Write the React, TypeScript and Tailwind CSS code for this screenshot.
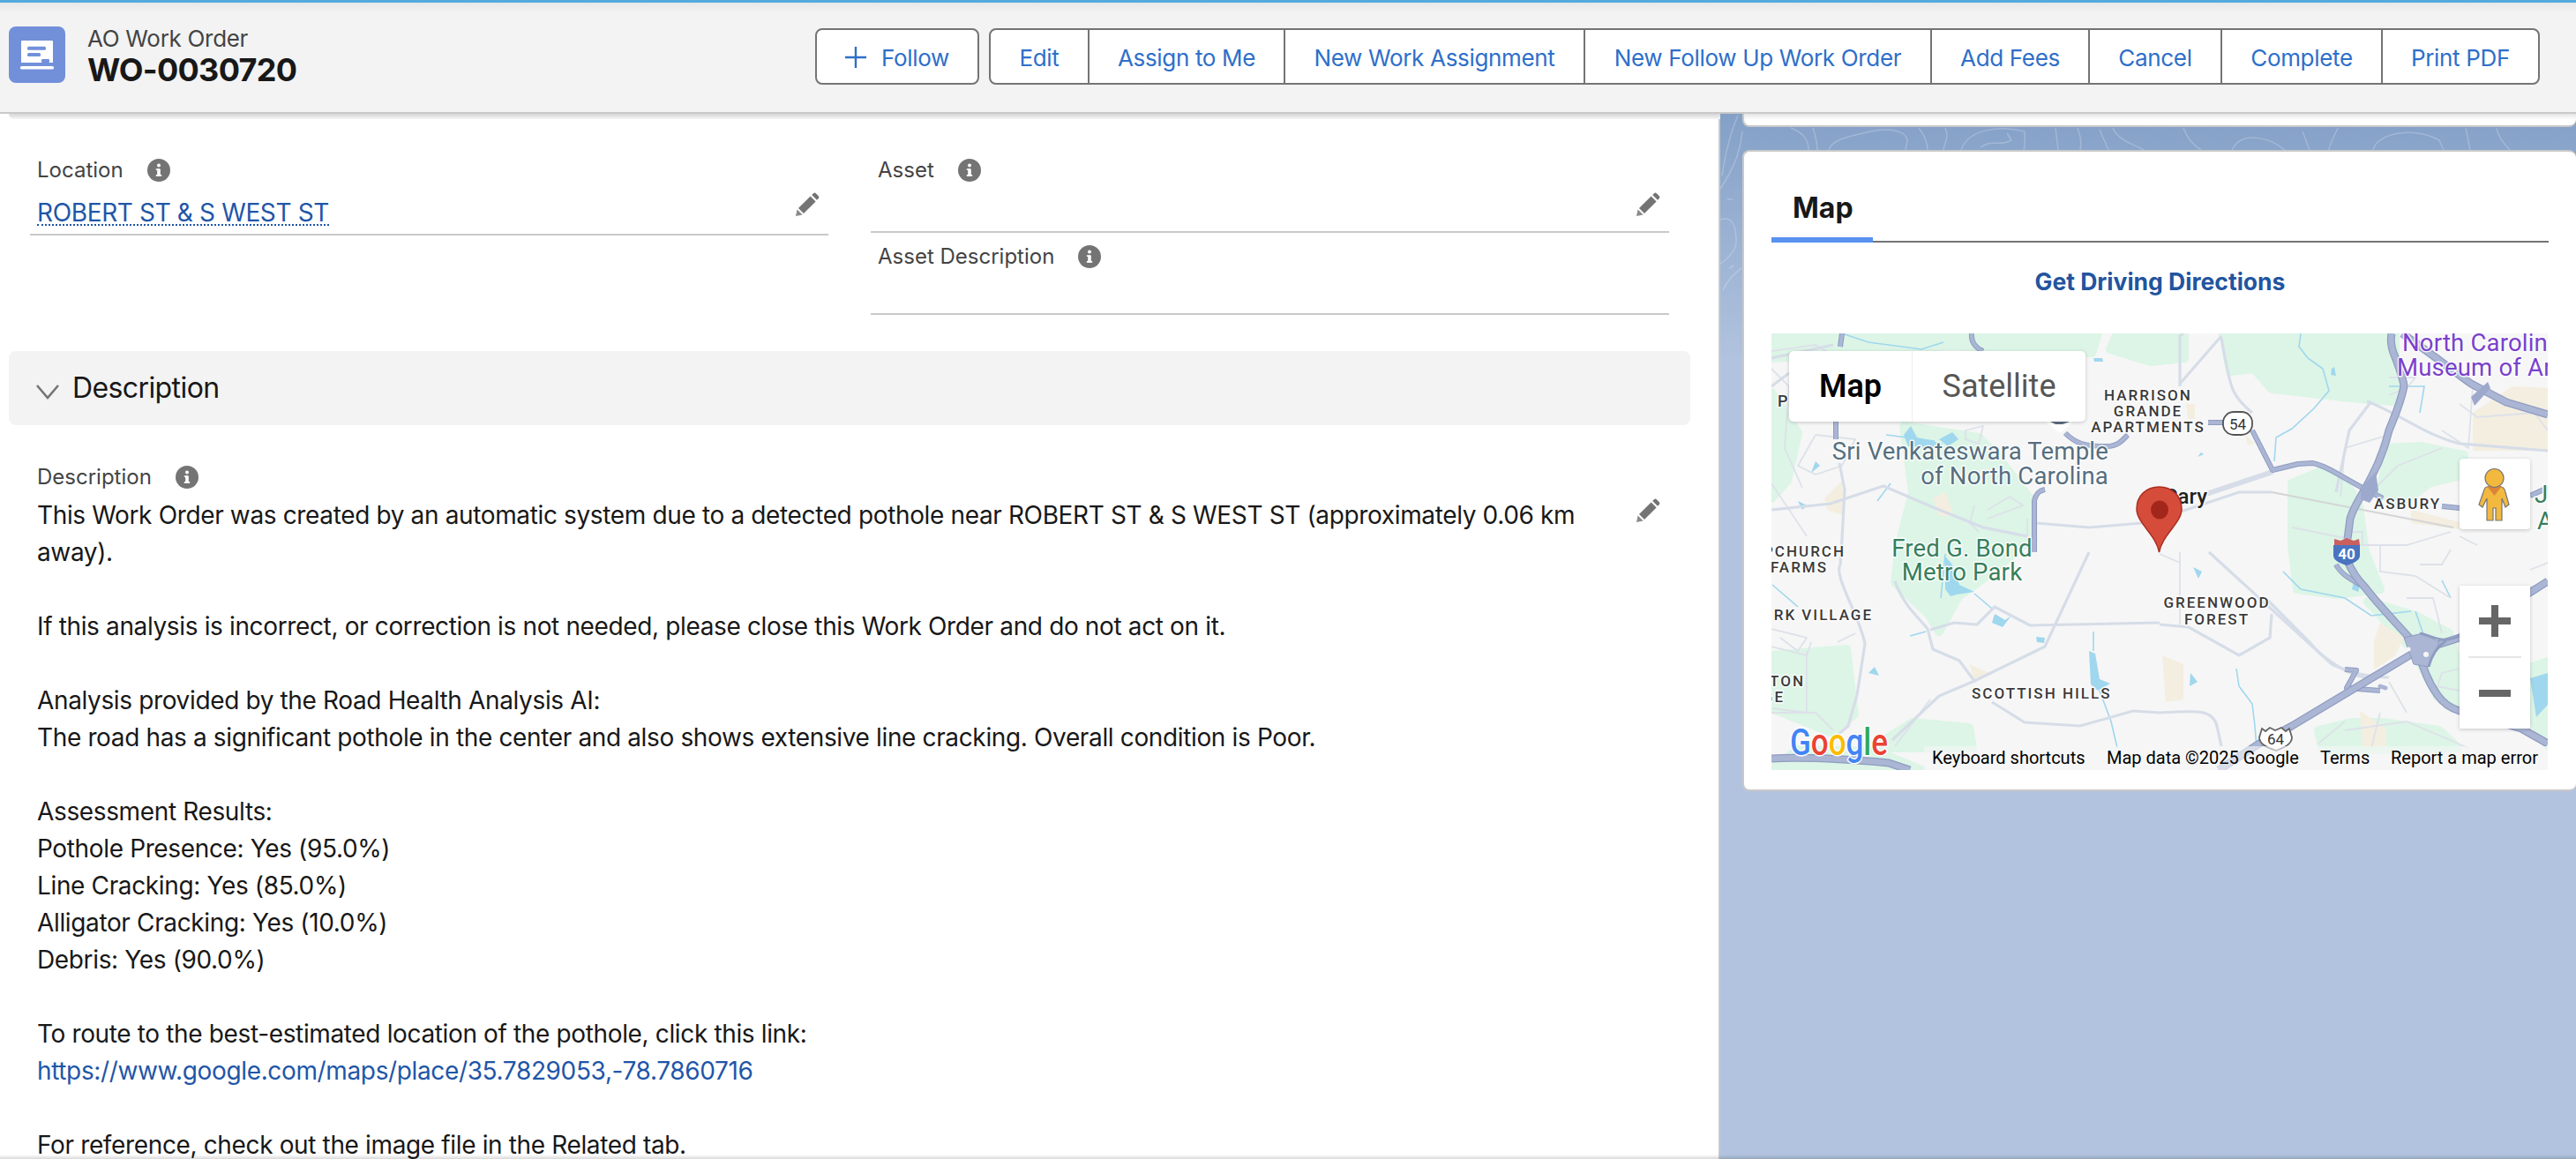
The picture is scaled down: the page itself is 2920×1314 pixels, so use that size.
import React from "react";

const Info = ({ className = "" }: { className?: string }) => (
  <svg viewBox="0 0 26 26" className={`w-[26px] h-[26px] shrink-0 ${className}`}>
    <circle cx="13" cy="13" r="13" fill="#747474" />
    <rect x="11.2" y="11.5" width="3.6" height="8" fill="#fff" />
    <rect x="9.8" y="18" width="6.4" height="1.8" fill="#fff" />
    <rect x="9.8" y="11.3" width="4" height="1.6" fill="#fff" />
    <circle cx="13" cy="7.6" r="2" fill="#fff" />
  </svg>
);

const Pencil = () => (
  <svg viewBox="0 0 28 28" className="w-[28px] h-[28px]">
    <path d="M1 27 L2.6 19.6 L8.6 25.4 Z" fill="#8a8a8a" />
    <path d="M4 18 L17.6 4.6 L23.6 10.4 L10 24 Z" fill="#747474" />
    <path d="M19.2 3 L21 1.2 C22 .4 23 .4 23.8 1.2 L26.8 4.2 C27.6 5 27.6 6 26.8 7 L25 8.8 Z" fill="#747474" />
  </svg>
);

const RecordIcon = () => (
  <div className="w-[64px] h-[64px] rounded-[8px] bg-[#7290da] shrink-0">
    <svg viewBox="0 0 64 64" className="w-[64px] h-[64px]">
      <path d="M15 16 H49 Q50 16 50 17 V41 H14 V17 Q14 16 15 16 Z" fill="#fff" />
      <rect x="37" y="37" width="9" height="4" rx="1" fill="#7290da" />
      <rect x="21" y="22.7" width="21" height="4" rx="1.5" fill="#7290da" />
      <rect x="21" y="30" width="15" height="4" rx="1.5" fill="#7290da" />
      <rect x="13" y="45" width="38" height="3.6" rx="1.5" fill="#fff" />
    </svg>
  </div>
);

const actions: { label: string; cls: string }[] = [
  { label: "Edit", cls: "w-[110px] rounded-l-[8px]" },
  { label: "Assign to Me", cls: "w-[222px] border-l-2 border-[#747474]" },
  { label: "New Work Assignment", cls: "w-[340px] border-l-2 border-[#747474]" },
  { label: "New Follow Up Work Order", cls: "w-[393px] border-l-2 border-[#747474]" },
  { label: "Add Fees", cls: "w-[179px] border-l-2 border-[#747474]" },
  { label: "Cancel", cls: "w-[150px] border-l-2 border-[#747474]" },
  { label: "Complete", cls: "w-[182px] border-l-2 border-[#747474]" },
  { label: "Print PDF", cls: "w-[178px] border-l-2 border-[#747474] rounded-r-[8px]" },
];

const Header = () => (
  <header className="relative z-20 h-[126px] shrink-0 flex items-center justify-between pl-[10px] pr-[41px] bg-gradient-to-b from-[#e8e8e8] via-[#f3f3f3] via-[10%] to-[#f3f3f3] border-b-2 border-[#c9c9c9]">
    <div className="flex items-center gap-[25px] -mt-[7px]">
      <RecordIcon />
      <div className="flex flex-col mt-[5px]">
        <span className="text-[26px] tracking-[-0.3px] leading-[30px] text-[#444444]">AO Work Order</span>
        <span className="text-[36px] tracking-[-0.7px] leading-[40px] font-bold text-[#181818]">WO-0030720</span>
      </div>
    </div>
    <div className="flex items-center gap-[11px] text-[26px] tracking-[-0.33px] text-[#2e6fc9] -mt-[2px]">
      <button className="w-[186px] h-[64px] flex items-center justify-center gap-[17px] pt-[2px] bg-white border-2 border-[#747474] rounded-[8px]">
        <svg viewBox="0 0 24 24" className="w-[24px] h-[24px]">
          <path d="M12 0 V24 M0 12 H24" stroke="#2e6fc9" strokeWidth="2.4" fill="none" />
        </svg>
        Follow
      </button>
      <div className="flex h-[64px] bg-white border-2 border-[#747474] rounded-[8px]">
        {actions.map((a) => (
          <button key={a.label} className={`h-full flex items-center justify-center pt-[2px] ${a.cls}`}>
            {a.label}
          </button>
        ))}
      </div>
    </div>
  </header>
);

const LabelRow = ({ text }: { text: string }) => (
  <div className="h-[28px] flex items-center gap-[27px] pl-[8px] text-[24px] text-[#444444]">
    <span>{text}</span>
    <Info />
  </div>
);

const body = `This Work Order was created by an automatic system due to a detected pothole near ROBERT ST & S WEST ST (approximately 0.06 km
away).

If this analysis is incorrect, or correction is not needed, please close this Work Order and do not act on it.

Analysis provided by the Road Health Analysis AI:
The road has a significant pothole in the center and also shows extensive line cracking. Overall condition is Poor.

Assessment Results:
Pothole Presence: Yes (95.0%)
Line Cracking: Yes (85.0%)
Alligator Cracking: Yes (10.0%)
Debris: Yes (90.0%)

To route to the best-estimated location of the pothole, click this link:
`;

const LeftColumn = () => (
  <main className="w-[1950px] shrink-0 bg-white border-r-2 border-[#c9c9c9] overflow-hidden">
    <div className="flex gap-[48px] pl-[34px] pt-[50px] w-[1892px] box-content">
      <div className="w-[905px]">
        <LabelRow text="Location" />
        <div className="h-[60px] border-b-2 border-[#c9c9c9] pl-[8px] pr-[10px] pt-[12px] flex justify-between">
          <a className="h-[36px] leading-[42px] text-[28px] tracking-[-0.36px] text-[#1f56a8] border-b-2 border-dotted border-[#1f56a8] mt-[1px]">ROBERT ST &amp; S WEST ST</a>
          <span className="-mt-[1px]"><Pencil /></span>
        </div>
      </div>
      <div className="w-[905px]">
        <LabelRow text="Asset" />
        <div className="h-[57px] border-b-2 border-[#c9c9c9] pr-[10px] pt-[11px] flex justify-end">
          <Pencil />
        </div>
        <div className="mt-[13px]">
          <LabelRow text="Asset Description" />
        </div>
        <div className="h-[52px] border-b-2 border-[#c9c9c9]" />
      </div>
    </div>
    <section className="ml-[10px] mt-[41px] w-[1906px] h-[84px] rounded-[8px] bg-[#f3f3f3] flex items-center gap-[14px] pl-[30px]">
      <svg viewBox="0 0 28 20" className="w-[28px] h-[20px] mt-[7px]">
        <path d="M2 3 L14 17 L26 3" stroke="#747474" strokeWidth="2.6" fill="none" />
      </svg>
      <h2 className="text-[32px] tracking-[-0.6px] text-[#181818]">Description</h2>
    </section>
    <div className="relative pl-[34px] mt-[45px]">
      <LabelRow text="Description" />
      <div className="absolute left-[1854px] top-[38px]"><Pencil /></div>
      <div className="pl-[8px] mt-[8px] text-[28px] tracking-[-0.36px] leading-[42px] text-[#181818] whitespace-pre-line">
        {body}
        <a className="text-[#1f56a8]">https://www.google.com/maps/place/35.7829053,-78.7860716</a>
        {"\n\nFor reference, check out the image file in the Related tab."}
      </div>
    </div>
  </main>
);

const wideHighways = [
  "M703 0 C701 10 703 18 707 27 C712 40 716 50 717 60 C713 80 706 95 700 110 C695 130 688 148 680 163 C672 180 660 195 656 210 L653 233",
  "M653 258 C658 270 665 280 673 288 C690 310 708 328 723 345 C730 358 736 370 740 381 C744 393 748 400 755 410 C762 420 770 425 780 428 L850 448 L880 465",
  "M880 281 L780 345 L730 361 L590 445 L553 465 L507 495",
  "M715 0 L747 23 L793 57 L833 78 L880 92",
  "M0 482 C40 480 90 483 133 487 L157 495",
];

const thinHighways = [
  "M545 110 L568 155 L597 148 L613 147 C630 150 650 165 670 175 L693 187",
  "M760 196 L780 198",
  "M860 184 L880 175",
  "M495 101 L512 101",
  "M227 0 C226 10 232 17 240 20",
  "M333 113 C345 125 355 128 380 128 C395 128 400 118 404 115",
  "M298 248 L298 190 C300 180 305 178 310 177",
  "M80 0 L78 15",
  "M73 100 L73 120",
  "M650 381 L663 382 L652 402 L690 405",
  "M640 262 C645 272 655 278 668 285",
];

const majorRoads = [
  "M0 200 L67 193 L127 173 L183 197 L240 220 L290 230",
  "M77 147 L83 177 L80 233 L78 262 C70 275 100 320 106 352 L97 410 L87 445 L67 462",
  "M140 281 C150 310 170 325 177 335 L183 358 L213 371 L230 394 L190 411 L137 461",
  "M180 336 L207 328 L233 330 L253 310 L293 331 L440 328",
  "M230 394 L310 355 L360 248",
  "M250 418 L287 441 L350 445 L410 428 L440 430 C480 428 500 425 505 445 L510 468",
  "M467 0 L463 3 L463 60",
  "M510 3 L463 57",
  "M510 5 C520 60 520 70 545 90",
  "M675 77 C710 90 740 115 780 125 L880 133",
  "M680 77 L655 110 L640 180",
  "M440 210 L530 180 L567 180",
  "M560 300 L610 350 C625 370 660 390 675 390",
  "M440 330 L473 333 L530 365 L565 345 L567 318",
  "M496 248 L635 375 C655 385 680 390 700 390",
  "M0 60 L20 45 M0 28 L70 13",
  "M300 215 L360 220 L420 215",
];

const minorRoads = [
  "M0 20 L50 13 L70 25", "M0 40 L20 60 L15 130 L35 175", "M0 170 L40 230", "M50 115 L95 120 L80 150 L50 160 L30 150 L50 115",
  "M220 110 L240 105 L235 125 L220 120 Z", "M245 200 L270 185 L285 195 L245 210", "M230 195 L225 215 L235 225",
  "M290 210 L290 235", "M440 250 L463 260 L463 330", "M463 260 L463 248", "M660 240 L720 240 L770 225",
  "M690 240 L690 270 L730 275", "M730 275 L770 300", "M735 262 L760 262 L770 245", "M720 300 L750 300 L760 340", "M780 380 L760 385 L755 400 L780 405",
  "M700 70 L720 62 L730 50 L700 50", "M680 180 L710 150 L760 130", "M645 185 L650 130 L700 115", "M780 80 L800 95 L865 90 L880 110", "M760 110 L790 130 L795 60",
  "M0 335 L40 345 L30 360 L10 345", "M0 355 L40 365 L45 350", "M0 425 L40 430 L40 360", "M0 430 L50 430 L70 450", "M75 350 L95 340",
  "M830 300 L880 280", "M860 268 L880 260", "M650 450 L720 440 L790 470", "M700 395 L720 430", "M690 430 L680 470", "M620 465 L650 440",
  "M140 468 L180 415", "M590 220 L650 232", "M670 240 L670 225 L655 225 L655 240", "M800 240 L790 235 L780 230",
];

const parks = [
  "512,0 707,0 707,77 677,75 647,72 613,68 567,63 547,40 520,43",
  "590,170 625,155 650,170 665,190 673,248 690,290 640,296 596,290 590,240",
  "700,130 735,128 785,138 785,160 745,170 712,195 690,180",
  "0,67 30,113 18,167 0,187",
  "150,105 235,118 255,138 295,190 292,235 240,278 212,298 190,338 178,318 140,282 145,240 160,180",
  "0,0 370,0 363,22 200,14 100,22 0,28",
  "0,365 85,358 94,432 67,452 0,425",
  "125,463 160,441 224,447 228,470 125,470",
  "625,473 620,450 657,441 693,441 757,450 778,470",
  "676,304 730,320 768,340 778,375 778,425 755,412 728,360",
  "862,378 880,372 880,468 862,438",
  "392,0 468,0 468,28 430,32 384,18",
  "0,495 30,472 120,474 170,495",
];

const tans = [
  "60,187 80,167 83,207 63,200",
  "183,187 197,180 207,207 190,207",
  "725,200 780,214 780,222 725,215",
  "690,328 717,345 707,365 683,381 683,348",
  "443,365 467,375 467,415 447,418",
  "667,428 697,448 697,468 670,468",
  "225,375 247,385 236,392 228,392",
  "470,80 480,80 480,97 472,97",
  "537,115 548,125 540,127",
  "795,90 840,60 880,62 880,133 795,133",
];

const lakes = [
  "197,253 205,262 213,285 230,293 210,296 203,298 197,290",
  "360,360 367,363 372,392 384,397 370,405 362,398",
  "860,391 880,385 880,421 867,435",
  "150,115 158,105 165,118 195,125 180,130 155,128",
  "190,120 205,112 212,120 200,128",
  "55,150 45,158 50,145",
  "365,28 375,28 376,32 366,32",
  "660,282 668,283 665,293 658,290",
  "253,318 265,325 272,320 262,333 250,328",
  "117,378 122,388 110,385",
  "488,270 478,265 484,278",
  "300,344 310,345 309,351 301,350",
  "30,190 40,195 35,200",
  "475,385 483,395 474,400",
  "635,40 638,38 640,48 634,47",
  "487,135 490,137 483,140",
];

const streams = [
  "M600 0 L598 15 L608 28 L625 40 L632 65 L615 85 L590 108 L572 118 L570 145",
  "M80 0 L110 10 L170 18 L195 10",
  "M130 115 L185 122",
  "M197 250 L192 300",
  "M157 343 L175 338",
  "M230 295 L250 312",
  "M365 338 L365 360",
  "M372 405 L385 440 L392 470",
  "M527 380 L530 400 L545 420 L548 445 L550 470",
  "M700 60 L740 60 L735 90",
  "M580 270 L600 290 L650 300 L680 320 L725 315",
  "M730 315 L742 350",
  "M1 285 L30 310",
  "M760 280 L770 300",
  "M135 170 L120 190",
];

const Lab = ({ x, y, size = 17, color = "#3a3a3a", weight = 500, ls = 2, anchor = "start", children }: { x: number; y: number; size?: number; color?: string; weight?: number; ls?: number; anchor?: "start" | "middle" | "end"; children: React.ReactNode }) => (
  <text x={x} y={y} fontSize={size} fill={color} fontWeight={weight} letterSpacing={ls} textAnchor={anchor} stroke="#fff" strokeWidth={3} strokeOpacity={0.85} paintOrder="stroke" strokeLinejoin="round">
    {children}
  </text>
);

const MapCanvas = () => (
  <svg viewBox="0 0 880 495" className="absolute inset-0 w-[880px] h-[495px] [font-family:Roboto,sans-serif]">
    <rect width="880" height="495" fill="#f6f6f6" />
    {parks.map((p, i) => <polygon key={i} points={p} fill="#dcf5e6" strokeLinejoin="round" stroke="#dcf5e6" strokeWidth="10" />)}
    {tans.map((p, i) => <polygon key={i} points={p} fill="#f4eee0" />)}
    {lakes.map((p, i) => <polygon key={i} points={p} fill="#9fd7ee" />)}
    {streams.map((d, i) => <path key={i} d={d} fill="none" stroke="#9fd7ee" strokeWidth="1.6" />)}
    {minorRoads.map((d, i) => <path key={i} d={d} fill="none" stroke="#dde1e9" strokeWidth="1.8" />)}
    {majorRoads.map((d, i) => <path key={i} d={d} fill="none" stroke="#d6dde8" strokeWidth="3.2" />)}
    <path d="M493 182 L568 157" fill="none" stroke="#d6dde8" strokeWidth="6" />
    <path d="M567 180 L773 220" fill="none" stroke="#d4d5d8" strokeWidth="2" />
    {thinHighways.map((d, i) => <path key={i} d={d} fill="none" stroke="#8f9cc2" strokeWidth="6" strokeLinejoin="round" />)}
    {thinHighways.map((d, i) => <path key={i} d={d} fill="none" stroke="#aab6d4" strokeWidth="4" strokeLinejoin="round" />)}
    {wideHighways.map((d, i) => <path key={i} d={d} fill="none" stroke="#8f9cc2" strokeWidth="9" strokeLinejoin="round" />)}
    {wideHighways.map((d, i) => <path key={i} d={d} fill="none" stroke="#aab6d4" strokeWidth="6.5" strokeLinejoin="round" />)}
    <path d="M685 157 L688 178 L678 192 L668 188 L668 175 Z" fill="#9da9cc" />
    <path d="M793 72 L812 55 L815 62 L797 82 Z" fill="#9da9cc" />
    <path d="M717 345 L738 340 L757 350 L745 378 L728 375 Z" fill="#aab6d4" stroke="#8f9cc2" />
    <path d="M735 340 C755 345 760 352 780 343 M745 378 C748 365 755 355 765 348" fill="none" stroke="#8f9cc2" strokeWidth="3" />
    <circle cx="722" cy="358" r="2.5" fill="#f6f6f6" /><circle cx="742" cy="364" r="3" fill="#f6f6f6" />
    <path d="M690 400 L696 402" stroke="#aab6d4" strokeWidth="5" strokeLinecap="round" />

    <path d="M310 100 H343 L327 113 Z" fill="#fff" />
    <path d="M316 100 H338 L330 103 H322 Z" fill="#5f6f83" />

    <Lab x={7} y={83} size={18} ls={1}>P</Lab>
    <Lab x={382} y={143} size={27.5} color="#566f80" weight={400} ls={0.2} anchor="end">Sri Venkateswara Temple</Lab>
    <Lab x={382} y={171} size={27.5} color="#566f80" weight={400} ls={0.2} anchor="end">of North Carolina</Lab>
    <Lab x={427} y={76} anchor="middle">HARRISON</Lab>
    <Lab x={427} y={94} anchor="middle">GRANDE</Lab>
    <Lab x={427} y={112} anchor="middle">APARTMENTS</Lab>
    <Lab x={494} y={193} size={24} color="#222" weight={500} ls={0} anchor="end">Cary</Lab>
    <Lab x={683} y={199} size={17}>ASBURY</Lab>
    <Lab x={216} y={253} size={27.5} color="#377e5c" weight={400} ls={0.2} anchor="middle">Fred G. Bond</Lab>
    <Lab x={216} y={280} size={27.5} color="#377e5c" weight={400} ls={0.2} anchor="middle">Metro Park</Lab>
    <Lab x={715} y={20} size={27.5} color="#7a41cc" weight={400} ls={0.2}>North Carolina</Lab>
    <Lab x={709} y={48} size={27.5} color="#7a41cc" weight={400} ls={0.2}>Museum of Art</Lab>
    <Lab x={84} y={253} anchor="end">PCHURCH</Lab>
    <Lab x={64} y={271} anchor="end">FARMS</Lab>
    <Lab x={115} y={325} anchor="end">RK VILLAGE</Lab>
    <Lab x={38} y={400} anchor="end">TON</Lab>
    <Lab x={15} y={418} anchor="end">GE</Lab>
    <Lab x={505} y={311} anchor="middle">GREENWOOD</Lab>
    <Lab x={505} y={330} anchor="middle">FOREST</Lab>
    <Lab x={227} y={414}>SCOTTISH HILLS</Lab>
    <text x={865} y={192} fontSize={27.5} fill="#377e5c" stroke="#fff" strokeWidth={3} paintOrder="stroke">J</text>
    <text x={868} y={222} fontSize={27.5} fill="#377e5c" stroke="#fff" strokeWidth={3} paintOrder="stroke">A</text>

    <rect x="512" y="89" width="33" height="26" rx="12" fill="#fff" stroke="#555" strokeWidth="1.8" />
    <text x="528.5" y="108.5" fontSize="17" fill="#333" textAnchor="middle">54</text>
    <path d="M556 448 L560 451 L565 447 L571 450 L578 447 L583 451 L587 448 L590 458 C590 466 580 470 572 473 C563 470 553 466 553 458 Z" fill="#fff" stroke="#666" strokeWidth="1.8" />
    <text x="571.5" y="466" fontSize="17" fill="#333" textAnchor="middle">64</text>
    <path d="M638 240 L638 233 L645 235 L652 232 L660 235 L666 233 L667 240 Z" fill="#c9605e" />
    <path d="M637 240 H667 V252 C667 258 658 261 652 263 C646 261 637 258 637 252 Z" fill="#4a74c0" />
    <text x="652" y="256" fontSize="17" fontWeight="700" fill="#fff" textAnchor="middle">40</text>

    <path d="M439.5 248 C436 228 414 215 414 199 C414 184 425 174 439.5 174 C454 174 465 184 465 199 C465 215 443 228 439.5 248 Z" fill="#d64c3b" stroke="#ab2f20" strokeWidth="1.5" />
    <ellipse cx="440" cy="200" rx="10" ry="10.5" fill="#a3261a" />

    <text x="21" y="478" fontSize="43" fontWeight="500" stroke="#fff" strokeWidth="3" paintOrder="stroke" textLength="111" lengthAdjust="spacingAndGlyphs">
      <tspan fill="#4285f4">G</tspan><tspan fill="#ea4335">o</tspan><tspan fill="#fbbc05">o</tspan><tspan fill="#4285f4">g</tspan><tspan fill="#34a853">l</tspan><tspan fill="#ea4335">e</tspan>
    </text>
  </svg>
);

const MapWidget = () => (
  <div className="relative w-[880px] h-[495px] overflow-hidden [font-family:Roboto,sans-serif]">
    <MapCanvas />
    <div className="absolute left-[20px] top-[20px] h-[80px] flex rounded-[5px] bg-white shadow-[0_1px_4px_rgba(0,0,0,0.2)] text-[36px]">
      <span className="w-[139px] h-full flex items-center justify-center font-semibold text-black">Map</span>
      <span className="w-[197px] h-full flex items-center justify-center text-[#565656] border-l border-[#eeeeee]">Satellite</span>
    </div>
    <div className="absolute left-[780px] top-[142px] w-[80px] h-[80px] rounded-[4px] bg-white shadow-[0_1px_4px_rgba(0,0,0,0.2)]">
      <svg viewBox="0 0 80 80" className="w-[80px] h-[80px]">
        <path d="M31 32 H47 C50 32 51 34 52 38 L56 52 L52 55 L48 45 V70 H41 V56 H38 V70 H31 V45 L26 55 L22 52 L27 38 C28 34 29 32 31 32 Z" fill="#f2b93e" stroke="#757575" strokeWidth="1.2" />
        <path d="M31 31 H48 L39.5 42 Z" fill="#dc843a" />
        <circle cx="39.5" cy="22" r="10.5" fill="#f2b93e" stroke="#757575" strokeWidth="1.2" />
      </svg>
    </div>
    <div className="absolute left-[780px] top-[286px] w-[80px] h-[162px] bg-white shadow-[0_1px_4px_rgba(0,0,0,0.2)] flex flex-col items-center">
      <svg viewBox="0 0 36 36" className="w-[36px] h-[36px] mt-[22px]">
        <path d="M14 0 H22 V14 H36 V22 H22 V36 H14 V22 H0 V14 H14 Z" fill="#666666" />
      </svg>
      <div className="w-[60px] h-[2px] bg-[#e6e6e6] mt-[22px]" />
      <div className="w-[36px] h-[8px] bg-[#666666] mt-[36px]" />
    </div>
    <div className="absolute left-[173px] right-0 bottom-0 h-[27px] bg-[#f6f6f6]/60 text-[20px] leading-[27px] text-black whitespace-nowrap">
      <span className="absolute left-[9px]">Keyboard shortcuts</span>
      <span className="absolute left-[207px]">Map data ©2025 Google</span>
      <span className="absolute left-[449px]">Terms</span>
      <span className="absolute left-[529px]">Report a map error</span>
    </div>
  </div>
);

const RightColumn = () => (
  <aside className="relative flex-1 bg-[linear-gradient(180deg,#84a0c7_0px,#8fa9cd_70px,#b1c3de_280px,#b1c3df_100%)] overflow-hidden">
    <svg className="absolute left-0 top-0 w-[970px] h-[280px]" fill="none" stroke="#ffffff" strokeOpacity="0.22" strokeWidth="1.5">
      <path d="M80 16 C95 22 100 30 100 41" />
      <path d="M105 16 C108 25 110 32 110 41" />
      <path d="M123 41 C127 28 150 25 170 20 C190 16 210 18 212 30 L210 41" />
      <path d="M225 16 C232 25 235 32 235 41" />
      <path d="M255 16 C260 28 254 32 253 41" />
      <path d="M273 41 C280 20 310 12 345 20 C345 28 346 35 344 41" />
      <path d="M295 38 C310 28 315 38 330 30 L325 22" />
      <path d="M380 16 L383 41" />
      <path d="M405 16 C408 25 410 32 408 41" />
      <path d="M430 18 L440 41" />
      <path d="M445 16 C450 30 470 35 480 41" />
      <path d="M525 16 C530 30 540 38 545 41" />
      <path d="M580 41 C590 20 620 25 640 41" />
      <path d="M660 20 L668 41" />
      <path d="M700 16 C695 28 690 35 690 41" />
      <path d="M740 41 C745 20 790 15 815 30 L820 41" />
      <path d="M845 16 L850 41" />
      <path d="M880 16 C882 28 890 35 895 41" />
      <path d="M20 2 C10 25 5 50 2 70" />
      <path d="M0 85 C10 70 22 50 25 20" />
      <path d="M8 97 H14" />
      <path d="M0 120 C15 115 18 130 18 145 C18 155 8 165 0 170" />
      <path d="M10 175 L15 172" />
      <path d="M3 200 C10 185 18 180 24 175" />
    </svg>
    <div className="relative h-[15px] ml-[25px] bg-white border-2 border-t-0 border-[#c9c9c9] border-r-0 rounded-bl-[8px] rounded-br-[8px] shadow-[inset_0_6px_6px_-4px_rgba(0,0,0,0.15)]" />
    <div className="relative mt-[26px] ml-[25px] h-[727px] bg-white border-2 border-r-0 border-[#c9c9c9] rounded-[8px] flex flex-col">
      <div className="mx-[31px] mt-[36px] h-[67px] border-b-2 border-[#747474] relative">
        <div className="absolute left-0 -bottom-[2px] w-[115px] h-[6px] bg-[#5891f0]" />
        <span className="absolute left-[24px] top-[8px] text-[32px] font-bold leading-[40px] text-[#181818]">Map</span>
      </div>
      <div className="text-center mt-[26px] h-[36px] leading-[36px] text-[26.5px] font-bold text-[#22549f]">Get Driving Directions</div>
      <div className="mx-[31px] mt-[41px]">
        <MapWidget />
      </div>
    </div>
  </aside>
);

export default function App() {
  return (
    <div className="relative w-[2920px] h-[1314px] overflow-hidden flex flex-col bg-white [font-family:Inter,sans-serif]">
      <div className="h-[3px] bg-[#54a9de] shrink-0" />
      <Header />
      <div className="relative flex-1 flex min-h-0">
        <div className="absolute left-[10px] right-[970px] top-0 h-[6px] bg-gradient-to-b from-[#d6d6d6] to-[#f6f6f6] rounded-bl-[8px] z-10" />
        <LeftColumn />
        <RightColumn />
        <div className="absolute left-0 right-0 bottom-0 h-[5px] bg-gradient-to-b from-transparent to-black/15" />
      </div>
    </div>
  );
}
